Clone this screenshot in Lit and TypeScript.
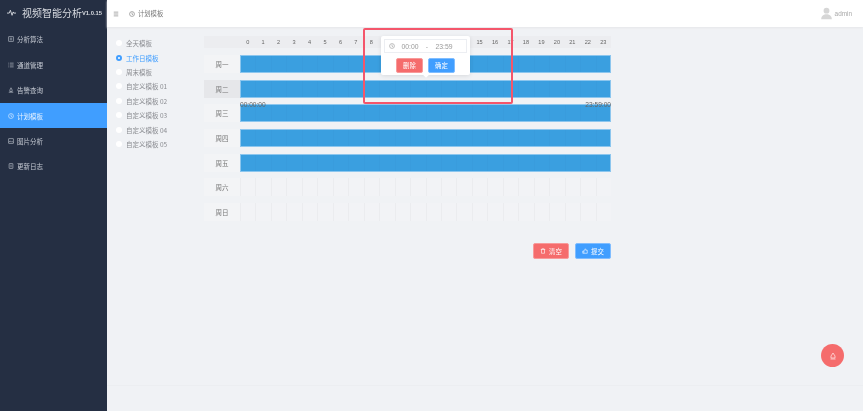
import { LitElement, html, css, svg } from "lit";
import { customElement } from "lit/decorators.js";

const icon = (body: unknown, size = 7) => html`<svg class="ic" width=${size} height=${size} viewBox="0 0 16 16" fill="none" stroke="currentColor" stroke-width="1.6">${body}</svg>`;

const clock = svg`<circle cx="8" cy="8" r="6.5"/><path d="M8 4v4.5l3 1.5"/>`;
const menu = [
  { t: "分析算法", i: svg`<rect x="2" y="2" width="12" height="12"/><path d="M5 6h6M5 10h6"/>` },
  { t: "通道管理", i: svg`<path d="M1 3h2M5 3h10M1 8h2M5 8h10M1 13h2M5 13h10"/>` },
  { t: "告警查询", i: svg`<path d="M8 2l3 6v4H5V8zM2 14h12"/>` },
  { t: "计划模板", i: clock, active: true },
  { t: "图片分析", i: svg`<rect x="2" y="2" width="12" height="12"/><path d="M2 11l4-3 3 3 2-2 3 3"/>` },
  { t: "更新日志", i: svg`<rect x="3" y="1.5" width="10" height="13" rx="1"/><path d="M6 6h4M6 10h4"/>` },
];
const templates = ["全天模板", "工作日模板", "周末模板", "自定义模板 01", "自定义模板 02", "自定义模板 03", "自定义模板 04", "自定义模板 05"];
const days = ["周一", "周二", "周三", "周四", "周五", "周六", "周日"];
const hours = Array.from({ length: 24 }, (_, i) => i);
// Hours 9 to 14 sit behind the open popover, so the reference does not show them.
const hourLabel = (h: number) => (h >= 9 && h <= 14 ? "" : String(h));

@customElement("app-root")
export class AppRoot extends LitElement {
  static styles = css`
    :host { display: block; width: 863px; height: 411px; overflow: hidden; background: #f0f2f5;
      font-family: "Noto Sans CJK SC", "Liberation Sans", sans-serif; font-size: 6.5px; color: #606266; }
    .ic { display: block; flex: none; }
    .app { display: flex; height: 411px; background: #f0f2f5; filter: blur(0.35px); }
    .side { width: 107px; flex: none; background: #252f43; color: #c4c9d2; }
    .brand { height: 24px; padding: 0 0 2.8px 7px; display: flex; align-items: center; gap: 6px; color: #d8dbe1; }
    .brand b { font-weight: 400; font-size: 10px; white-space: nowrap; }
    .brand i { font-style: normal; font-weight: 700; font-size: 5.8px; font-family: "Liberation Sans", sans-serif; margin-left: -6px; margin-top: 2px; }
    .nav { display: flex; align-items: center; gap: 3px; height: 25.4px; padding-left: 8px; }
    .nav.active { background: #409eff; color: #e8f3ff; }
    .main { flex: 1; min-width: 0; display: flex; flex-direction: column; position: relative; background: #f0f2f5; }
    .top { height: 27px; background: #fff; display: flex; align-items: center; padding: 0 11px 0 6px; color: #777; box-shadow: 0 1px 2px #e6e7ea; flex: none; }
    .crumb { display: flex; align-items: center; gap: 3px; margin-left: 10px; font-size: 6.3px; }
    .user { margin-left: auto; display: flex; align-items: center; gap: 2px; color: #aaa; font-size: 6.4px; font-family: "Liberation Sans", sans-serif; }
    .body { display: flex; padding: 9px 0 0 7px; }
    .tpl { width: 90px; flex: none; }
    .radio { display: flex; align-items: center; height: 14.4px; gap: 4px; color: #8b8d92; white-space: nowrap; }
    .radio::before { content: ""; width: 6px; height: 6px; border-radius: 50%; background: #fff; box-sizing: border-box; margin-left: 2px; }
    .radio.on { color: #409eff; }
    .radio.on::before { background: #fff; border: 2px solid #409eff; }
    .wrap { width: 407px; position: relative; }
    .head { height: 12px; background: #ecedf0; display: grid; grid-template-columns: 36px repeat(24, 1fr); align-items: center; font-size: 5.6px; color: #666; font-family: "Liberation Sans", sans-serif; margin-bottom: 7px; }
    .hour { text-align: center; }
    .rows { display: grid; grid-auto-rows: 18px; row-gap: 6.7px; }
    .row { display: grid; grid-template-columns: 36px 1fr; }
    .day { display: flex; align-items: center; justify-content: center; background: #f3f4f6; color: #777; }
    .day.sel { background: #e6e7ea; }
    .bar { background: repeating-linear-gradient(90deg, #3a9fe0 0, #3a9fe0 14.46px, #399cdd 14.46px, #399cdd 15.46px); border: 0.5px solid #8cc6ee; box-sizing: border-box; }
    .empty { background: repeating-linear-gradient(90deg, #ebecef 0, #ebecef 1px, #f2f3f6 1px, #f2f3f6 15.46px); }
    .actions { display: flex; justify-content: flex-end; gap: 6px; margin-top: 22px; }
    .btn { height: 16px; width: 36px; border-radius: 2px; display: flex; align-items: center; justify-content: center; gap: 3px; color: #fff; font-size: 6.4px; box-sizing: border-box; }
    .red { background: #f56c6c; border: 0.5px solid #f89a9a; }
    .blue { background: #409eff; border: 0.5px solid #80bdff; }
    .stamp { position: absolute; top: 64.5px; font-size: 6.6px; color: #666; font-family: "Liberation Sans", sans-serif; line-height: 8px; }
    .stamp.start { left: 36px; }
    .stamp.end { right: 0; }
    .pop { position: absolute; left: 177px; top: 0; width: 89px; height: 39px; background: #fff; border-radius: 2px; box-shadow: 0 1px 4px #0000001a; box-sizing: border-box; padding: 3px; }
    .pop::after { content: ""; position: absolute; left: 43px; bottom: -2px; width: 4px; height: 4px; background: #fff; transform: rotate(45deg); }
    .input { height: 14px; border: 0.5px solid #eceef2; box-sizing: border-box; display: flex; align-items: center; color: #999; padding-left: 4px; font-size: 6.8px; font-family: "Liberation Sans", sans-serif; }
    .input span { text-align: center; }
    .t1 { width: 24px; margin-left: 3px; }
    .t2 { width: 10px; }
    .t3 { width: 24px; }
    .pop-btns { display: flex; justify-content: center; gap: 5px; margin-top: 5px; }
    .pop-btns .btn { width: 27px; height: 15px; }
    .mark { position: absolute; left: 159px; top: -8px; width: 150px; height: 76px; border: 2px solid #f4566b; border-radius: 2px; box-sizing: border-box; }
    .fab { position: absolute; left: 714px; top: 344px; width: 23px; height: 23px; border-radius: 50%; background: #f56c6c; color: #fdd; display: flex; align-items: center; justify-content: center; }
    .line { position: absolute; left: 0; right: 0; top: 385px; height: 1px; background: #eceef1; }
  `;

  render() {
    return html`<div class="app">
      <aside class="side">
        <div class="brand">
          ${icon(svg`<path d="M0 9h4l2-5 3 9 2-6 1 2h4"/>`, 9)}
          <b>视频智能分析</b><i>V1.0.15</i>
        </div>
        ${menu.map((m) => html`<div class="nav ${m.active ? "active" : ""}">${icon(m.i, 6)}<span>${m.t}</span></div>`)}
      </aside>
      <div class="main">
        <header class="top">
          ${icon(svg`<path d="M2 3h12M2 8h12M2 13h12"/>`, 6)}
          <div class="crumb">${icon(clock, 6)}<span>计划模板</span></div>
          <div class="user">
            <svg class="ic" width="13" height="13" viewBox="0 0 16 16" fill="#d6d6d6"><circle cx="8" cy="4.5" r="3.6"/><path d="M1.5 15c0-4 3-6 6.5-6s6.5 2 6.5 6z"/></svg>
            <span>admin</span>
          </div>
        </header>
        <div class="body">
          <div class="tpl">
            ${templates.map((t, i) => html`<div class="radio ${i === 1 ? "on" : ""}">${t}</div>`)}
          </div>
          <div class="wrap">
            <div class="head"><span></span>${hours.map((h) => html`<span class="hour">${hourLabel(h)}</span>`)}</div>
            <div class="rows">
              ${days.map((d, i) => html`<div class="row"><div class="day ${i === 1 ? "sel" : ""}">${d}</div><div class=${i < 5 ? "bar" : "empty"}></div></div>`)}
            </div>
            <div class="actions">
              <div class="btn red">${icon(svg`<path d="M2 4h12M5 4V2h6v2M4 4v10h8V4"/>`, 6)}清空</div>
              <div class="btn blue">${icon(svg`<path d="M2 8h3v6H2zM5 8l4-6 1 1v3h4v8H5"/>`, 6)}提交</div>
            </div>
            <span class="stamp start">00:00:00</span>
            <span class="stamp end">23:59:00</span>
            <div class="pop">
              <div class="input">${icon(clock, 6)}<span class="t1">00:00</span><span class="t2">-</span><span class="t3">23:59</span></div>
              <div class="pop-btns"><div class="btn red">删除</div><div class="btn blue">确定</div></div>
            </div>
            <div class="mark"></div>
          </div>
        </div>
        <div class="line"></div>
        <div class="fab">${icon(svg`<path d="M8 2l4 6v4H4V8zM3 14h10"/>`, 8)}</div>
      </div>
    </div>`;
  }
}
